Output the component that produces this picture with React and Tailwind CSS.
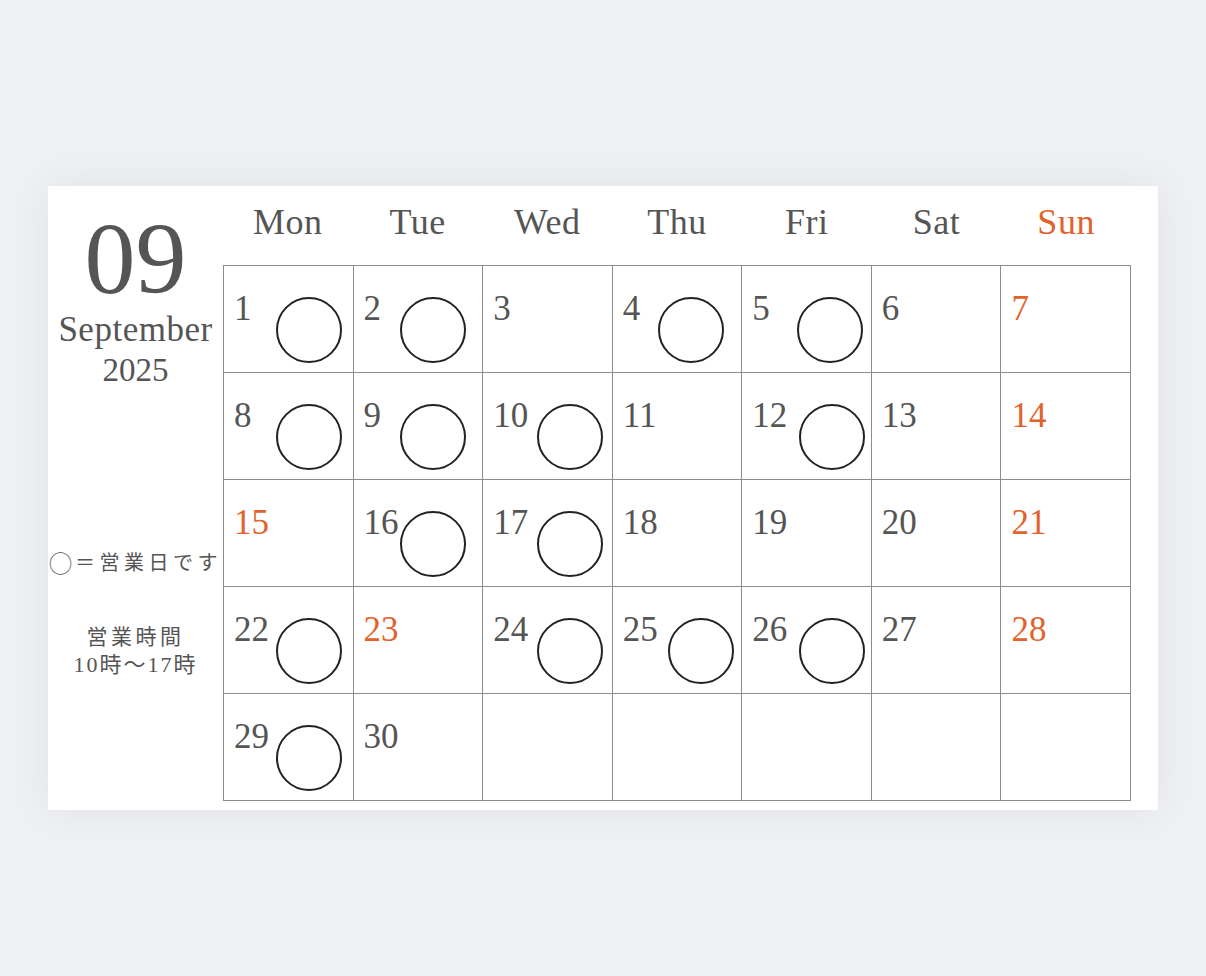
import React from 'react';

const serif = { fontFamily: '"Liberation Serif", "Noto Sans CJK JP", serif' };
const jp = { fontFamily: '"Noto Sans CJK JP", serif' };

const DAYS = ['Mon', 'Tue', 'Wed', 'Thu', 'Fri', 'Sat', 'Sun'];

// circle offsets are hand-tuned per day (the marks in the original aren't evenly placed)
const OPEN = {
  1: 'left-[52px]',
  2: 'left-[46px]',
  4: 'left-[45px]',
  5: 'left-[55px]',
  8: 'left-[52px]',
  9: 'left-[46px]',
  10: 'left-[54px]',
  12: 'left-[57px]',
  16: 'left-[46px]',
  17: 'left-[54px]',
  22: 'left-[52px]',
  24: 'left-[54px]',
  25: 'left-[55px]',
  26: 'left-[57px]',
  29: 'left-[52px]',
};

// Sundays plus the 23rd holiday
const RED = [7, 14, 15, 21, 23, 28];

const cells = Array.from({ length: 35 }, (_, i) => (i < 30 ? i + 1 : null));

const DayCell = ({ day }) => (
  <div className="relative h-[107px] border-r border-b border-[#8c8c8c]">
    {day && (
      <>
        <span
          className={`absolute left-[10px] top-[25px] text-[35px] leading-none ${
            RED.includes(day) ? 'text-[#e2622b]' : 'text-[#555]'
          }`}
        >
          {day}
        </span>
        {OPEN[day] && (
          <div className={`absolute top-[31px] ${OPEN[day]} w-[66px] h-[66px] rounded-full border-2 border-[#222]`} />
        )}
      </>
    )}
  </div>
);

export default function App() {
  return (
    <div className="min-h-screen bg-[#eff0f4] pt-[186px]" style={serif}>
      <div className="mx-auto w-[1110px] h-[624px] bg-white flex shadow-[0_0_40px_rgba(0,0,0,0.06)]">
        {/* Left: month + legend */}
        <div className="w-[175px] flex flex-col items-center text-[#555]">
          <div className="mt-[22px] text-[102px] leading-none">09</div>
          <div className="text-[35px] leading-[40px] tracking-[0.5px]">September</div>
          <div className="text-[33px] leading-[40px]">2025</div>
          <div
            className="mt-[158px] h-[28px] flex items-center text-[20px] leading-[28px] tracking-[4.5px] whitespace-nowrap"
            style={jp}
          >
            <span className="text-[23px] leading-[28px] tracking-[3px]">◯</span>
            <span>＝営業日です</span>
          </div>
          <div className="mt-[45px] text-center text-[21px] leading-[29px]">
            <div className="tracking-[3.5px]" style={jp}>営業時間</div>
            <div className="text-[22px] tracking-[2px]">10時～17時</div>
          </div>
        </div>

        {/* Right: calendar grid */}
        <div className="w-[908px]">
          <div className="grid grid-cols-7 h-[79px] items-center pb-[8px]">
            {DAYS.map((d) => (
              <div
                key={d}
                className={`text-center text-[36px] leading-none tracking-[0.5px] ${
                  d === 'Sun' ? 'text-[#e2622b]' : 'text-[#555]'
                }`}
              >
                {d}
              </div>
            ))}
          </div>
          <div className="grid grid-cols-7 border-l border-t border-[#8c8c8c]">
            {cells.map((day, i) => (
              <DayCell key={i} day={day} />
            ))}
          </div>
        </div>
      </div>
    </div>
  );
}
